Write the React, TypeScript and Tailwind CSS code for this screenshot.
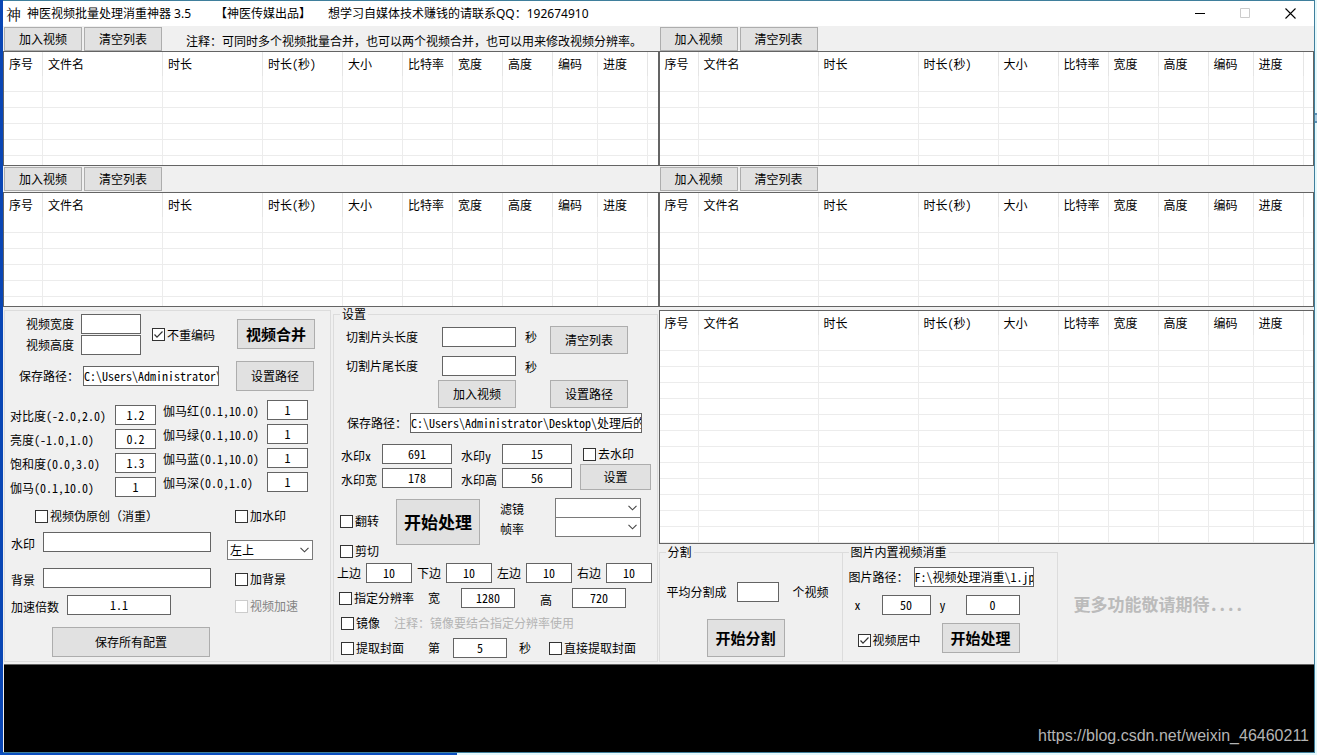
import type { ReactNode } from "react"
import clsx from "clsx"

const COLUMNS = [
  { title: "序号", width: "w-[39px]" },
  { title: "文件名", width: "w-[120px]" },
  { title: "时长", width: "w-[100px]" },
  { title: "时长(秒)", width: "w-[80px]" },
  { title: "大小", width: "w-[60px]" },
  { title: "比特率", width: "w-[50px]" },
  { title: "宽度", width: "w-[50px]" },
  { title: "高度", width: "w-[50px]" },
  { title: "编码", width: "w-[45px]" },
  { title: "进度", width: "w-[50px]" },
]

const BASIC_FILTERS = [
  { id: "contrast", label: "对比度(-2.0,2.0)", value: "1.2" },
  { id: "brightness", label: "亮度(-1.0,1.0)", value: "0.2" },
  { id: "saturation", label: "饱和度(0.0,3.0)", value: "1.3" },
  { id: "gamma", label: "伽马(0.1,10.0)", value: "1" },
]

const GAMMA_FILTERS = [
  { id: "gamma-r", label: "伽马红(0.1,10.0)", value: "1" },
  { id: "gamma-g", label: "伽马绿(0.1,10.0)", value: "1" },
  { id: "gamma-b", label: "伽马蓝(0.1,10.0)", value: "1" },
  { id: "gamma-w", label: "伽马深(0.0,1.0)", value: "1" },
]

const EDGES = [
  { id: "top", label: "上边" },
  { id: "bottom", label: "下边" },
  { id: "left", label: "左边" },
  { id: "right", label: "右边" },
]

function Button({ className, children }: { className?: string; children: ReactNode }) {
  return (
    <button
      type="button"
      className={clsx("shrink-0 border border-[#adadad] bg-[#e1e1e1] text-center whitespace-nowrap", className)}
    >
      {children}
    </button>
  )
}

type FieldProps = {
  id: string
  label: string
  labelClass?: string
  className?: string
  value?: string
  left?: boolean
}

function Field({ id, label, labelClass, className, value = "", left }: FieldProps) {
  return (
    <>
      <label htmlFor={id} className={clsx("shrink-0 whitespace-nowrap", labelClass)}>
        {label}
      </label>
      <input
        id={id}
        type="text"
        defaultValue={value}
        className={clsx(
          "h-5 shrink-0 border border-[#646464] bg-white pb-[2px] outline-none",
          left ? "text-left" : "text-center",
          className
        )}
      />
    </>
  )
}

type CheckProps = { label: string; checked?: boolean; disabled?: boolean; className?: string }

function Check({ label, checked, disabled, className }: CheckProps) {
  return (
    <label
      className={clsx(
        "flex h-5 shrink-0 items-center gap-[2px] whitespace-nowrap",
        disabled && "text-[#838383]",
        className
      )}
    >
      <span className="grid shrink-0">
        <input
          type="checkbox"
          defaultChecked={checked}
          disabled={disabled}
          className="peer col-start-1 row-start-1 size-[13px] appearance-none border border-[#333] bg-white disabled:border-[#ccc]"
        />
        <svg
          viewBox="0 0 13 13"
          className="pointer-events-none invisible col-start-1 row-start-1 size-[13px] peer-checked:visible"
        >
          <path d="M2.5 6.5 5 9.2l5.5-5.7" fill="none" stroke="#333" strokeWidth="1.2" />
        </svg>
      </span>
      {label}
    </label>
  )
}

function Select({ label, options, className }: { label: string; options: string[]; className?: string }) {
  return (
    <div className={clsx("grid shrink-0", className)}>
      <select
        aria-label={label}
        className="col-start-1 row-start-1 h-5 w-full appearance-none border border-[#7a7a7a] bg-white px-[2px] outline-none"
      >
        {options.map((o) => (
          <option key={o}>{o}</option>
        ))}
      </select>
      <svg
        viewBox="0 0 9 6"
        className="pointer-events-none col-start-1 row-start-1 mr-1 h-[6px] w-[9px] self-center justify-self-end"
      >
        <path d="M.5.8l4 4 4-4" fill="none" stroke="#444" strokeWidth="1.1" />
      </svg>
    </div>
  )
}

function Group({ title, className, children }: { title: string; className?: string; children: ReactNode }) {
  return (
    <fieldset className={clsx("min-w-0 border border-[#dcdcdc]", className)}>
      <legend className="ml-[6px] px-[2px] leading-3">{title}</legend>
      {children}
    </fieldset>
  )
}

function VideoTable({ rows, className }: { rows: number; className?: string }) {
  return (
    <div className={clsx("overflow-hidden border border-[#646464] bg-white", className)}>
      <table className="w-full table-fixed border-separate border-spacing-0">
        <thead>
          <tr className="h-6">
            {COLUMNS.map((c) => (
              <th
                key={c.title}
                className={clsx("border-r border-[#e5e5e5] p-0 pl-[5px] text-left font-normal whitespace-nowrap", c.width)}
              >
                {c.title}
              </th>
            ))}
            <td className="p-0" />
          </tr>
        </thead>
        <tbody>
          {Array.from({ length: rows }).map((_, i) => (
            <tr key={i} className="h-4">
              {COLUMNS.map((c) => (
                <td key={c.title} className="border-r border-b border-[#ececec] p-0" />
              ))}
              <td className="border-b border-[#ececec] p-0" />
            </tr>
          ))}
        </tbody>
      </table>
    </div>
  )
}

function ListPanel({ note, className }: { note?: string; className?: string }) {
  return (
    <section>
      <div className={clsx("flex gap-[2px] px-px pt-px", className)}>
        <Button className="h-6 w-[78px]">加入视频</Button>
        <Button className="h-6 w-[78px]">清空列表</Button>
        {note && <p className="ml-[22px] self-center pt-1 whitespace-nowrap">{note}</p>}
      </div>
      <VideoTable rows={6} className="h-[115px]" />
    </section>
  )
}

function TitleBar() {
  return (
    <header className="flex h-[25px] items-center bg-white font-['Noto_Sans','Noto_Sans_CJK_SC',sans-serif]">
      <span className="ml-[2px] w-[17px] text-center font-['Noto_Serif_CJK_SC','Noto_Sans_CJK_SC',serif] text-[15px] leading-4">
        神
      </span>
      <h1 className="ml-[5px] flex text-xs font-normal whitespace-nowrap">
        <span className="w-[188px]">神医视频批量处理消重神器 3.5</span>
        <span className="w-[113px]">【神医传媒出品】</span>
        <span>想学习自媒体技术赚钱的请联系QQ：192674910</span>
      </h1>
      <div className="ml-auto flex gap-3 pr-[7px]">
        <button type="button" aria-label="最小化" className="px-[11px]">
          <svg viewBox="0 0 11 11" className="size-[11px]">
            <path d="M0 5.5h10" stroke="#000" />
          </svg>
        </button>
        <button type="button" aria-label="最大化" disabled className="px-[11px]">
          <svg viewBox="0 0 11 11" className="size-[11px]">
            <path d="M.5.5h9v9h-9z" fill="none" stroke="#ccc" />
          </svg>
        </button>
        <button type="button" aria-label="关闭" className="px-[11px]">
          <svg viewBox="0 0 11 11" className="size-[11px]">
            <path d="M.5.5l10 10M10.5.5l-10 10" stroke="#000" strokeWidth="1.1" />
          </svg>
        </button>
      </div>
    </header>
  )
}

function MergeGroup() {
  return (
    <section className="mt-[3px] mb-px ml-px w-[327px] shrink-0 border border-[#dcdcdc] pt-[3px]">
      <div className="flex pl-[21px]">
        <div className="flex flex-col gap-px">
          <div className="flex items-center">
            <Field id="video-width" label="视频宽度" labelClass="w-[55px]" className="w-[60px]" />
          </div>
          <div className="flex items-center">
            <Field id="video-height" label="视频高度" labelClass="w-[55px]" className="w-[60px]" />
          </div>
        </div>
        <Check label="不重编码" checked className="ml-[11px] self-center" />
        <Button className="mt-[5px] ml-[22px] h-[30px] w-[78px] text-[15px] font-bold">视频合并</Button>
      </div>

      <div className="mt-[6px] flex items-center pl-[14px]">
        <Field
          id="merge-path"
          label="保存路径："
          labelClass="w-16"
          className="w-[136px]"
          value="C:\Users\Administrator\Desktop"
          left
        />
        <Button className="ml-[17px] h-[30px] w-[78px]">设置路径</Button>
      </div>

      <div className="mt-[9px] flex pl-[5px]">
        <div className="flex flex-col gap-1 pt-[5px]">
          {BASIC_FILTERS.map((f) => (
            <div key={f.id} className="flex items-center">
              <Field id={f.id} label={f.label} labelClass="w-[105px] pt-[2px]" className="w-[41px]" value={f.value} />
            </div>
          ))}
        </div>
        <div className="ml-[7px] flex flex-col gap-1">
          {GAMMA_FILTERS.map((f) => (
            <div key={f.id} className="flex items-center">
              <Field id={f.id} label={f.label} labelClass="w-[104px] pt-[2px]" className="w-[41px]" value={f.value} />
            </div>
          ))}
        </div>
      </div>

      <div className="mt-[9px] flex pl-[6px]">
        <div className="flex w-[216px] flex-col">
          <Check label="视频伪原创（消重）" className="ml-6" />
          <div className="mt-[6px] flex items-center">
            <Field id="watermark" label="水印" labelClass="w-8 pt-1" className="w-[168px]" />
          </div>
          <div className="mt-4 flex items-center">
            <Field id="background" label="背景" labelClass="w-8 pt-1" className="w-[168px]" />
          </div>
          <div className="mt-[7px] flex items-center">
            <Field id="speed" label="加速倍数" labelClass="w-14 pt-1" className="w-[104px]" value="1.1" />
          </div>
          <Button className="mt-3 ml-[41px] h-[30px] w-[158px]">保存所有配置</Button>
        </div>
        <div className="flex flex-col">
          <Check label="加水印" className="ml-2" />
          <Select label="水印位置" options={["左上", "右上", "左下", "右下"]} className="mt-[14px] w-[86px]" />
          <Check label="加背景" className="mt-[9px] ml-2" />
          <Check label="视频加速" disabled className="mt-[7px] ml-2" />
        </div>
      </div>
    </section>
  )
}

function SettingsGroup() {
  return (
    <Group title="设置" className="mt-px mr-px mb-px ml-[2px] flex-1">
      <div className="mt-[6px] flex">
        <div className="flex w-[216px] flex-col pl-3">
          <div className="mt-px flex items-center">
            <Field id="cut-head" label="切割片头长度" labelClass="w-24" className="w-[74px]" />
            <span className="ml-[9px]">秒</span>
          </div>
          <div className="mt-[9px] flex items-center">
            <Field id="cut-tail" label="切割片尾长度" labelClass="w-24" className="w-[74px]" />
            <span className="ml-[9px] pt-[2px]">秒</span>
          </div>
          <Button className="mt-1 ml-[92px] h-7 w-[78px]">加入视频</Button>
        </div>
        <div className="flex flex-col justify-between">
          <Button className="h-7 w-[78px]">清空列表</Button>
          <Button className="h-7 w-[78px]">设置路径</Button>
        </div>
      </div>

      <div className="mt-[5px] flex items-center pl-[13px]">
        <Field
          id="output-path"
          label="保存路径："
          labelClass="w-[63px]"
          className="w-[232px]"
          value="C:\Users\Administrator\Desktop\处理后的视频"
          left
        />
      </div>

      <div className="mt-[11px] flex pl-[7px]">
        <div className="flex flex-col gap-1">
          <div className="flex items-center">
            <Field id="wm-x" label="水印x" labelClass="w-[41px] pt-1" className="w-[70px]" value="691" />
            <Field id="wm-y" label="水印y" labelClass="ml-[9px] w-[41px] pt-1" className="w-[70px]" value="15" />
          </div>
          <div className="flex items-center">
            <Field id="wm-w" label="水印宽" labelClass="w-[41px] pt-1" className="w-[70px]" value="178" />
            <Field id="wm-h" label="水印高" labelClass="ml-[9px] w-[41px] pt-1" className="w-[70px]" value="56" />
          </div>
        </div>
        <div className="ml-2 flex flex-col">
          <Check label="去水印" className="ml-[3px]" />
          <Button className="h-[26px] w-[71px]">设置</Button>
        </div>
      </div>

      <div className="mt-2 flex">
        <div className="flex w-[62px] flex-col pt-[13px] pl-[6px]">
          <Check label="翻转" />
          <Check label="剪切" className="mt-[10px]" />
        </div>
        <Button className="mt-px h-[46px] w-[84px] text-[17px] font-bold">开始处理</Button>
        <div className="ml-5 flex w-[55px] flex-col pt-px leading-5">
          <span>滤镜</span>
          <span>帧率</span>
        </div>
        <div className="flex flex-col">
          <Select label="滤镜" options={[""]} className="w-[86px]" />
          <Select label="帧率" options={[""]} className="-mt-px w-[86px]" />
        </div>
      </div>

      <div className="mt-[2px] flex items-center gap-[5px] pl-[3px]">
        {EDGES.map((e) => (
          <div key={e.id} className="flex items-center">
            <Field id={`edge-${e.id}`} label={e.label} labelClass="w-[29px]" className="w-[46px]" value="10" />
          </div>
        ))}
      </div>

      <div className="mt-[5px] flex items-center pl-[5px]">
        <Check label="指定分辨率" className="w-[89px]" />
        <Field id="res-w" label="宽" labelClass="w-[33px]" className="w-[54px]" value="1280" />
        <Field id="res-h" label="高" labelClass="ml-[25px] w-8 pt-1" className="w-[54px]" value="720" />
      </div>

      <div className="mt-[5px] flex items-center pl-[7px]">
        <Check label="镜像" className="w-[53px]" />
        <span className="text-[#b4b4b4]">注释：镜像要结合指定分辨率使用</span>
      </div>

      <div className="mt-[5px] mb-[3px] flex items-center pl-[7px]">
        <Check label="提取封面" className="w-[87px]" />
        <Field id="cover-sec" label="第" labelClass="w-[25px]" className="w-[54px]" value="5" />
        <span className="ml-3">秒</span>
        <Check label="直接提取封面" className="ml-[18px]" />
      </div>
    </Group>
  )
}

function SplitGroup() {
  return (
    <Group title="分割" className="w-[184px] shrink-0">
      <div className="mt-6 flex items-center pl-[7px]">
        <Field id="split-count" label="平均分割成" labelClass="w-[70px]" className="w-[42px]" />
        <span className="ml-[14px]">个视频</span>
      </div>
      <Button className="mt-[17px] ml-[47px] h-[38px] w-[78px] text-[15px] font-bold">开始分割</Button>
    </Group>
  )
}

function PictureGroup() {
  return (
    <Group title="图片内置视频消重" className="-ml-px w-[216px] shrink-0">
      <div className="mt-[9px] flex items-center pl-[6px]">
        <Field
          id="picture-path"
          label="图片路径："
          labelClass="w-[65px]"
          className="w-[120px]"
          value="F:\视频处理消重\1.jpg"
          left
        />
      </div>
      <div className="mt-2 flex items-center pl-3">
        <Field id="pic-x" label="x" labelClass="w-[27px]" className="w-[49px]" value="50" />
        <Field id="pic-y" label="y" labelClass="ml-[9px] w-[26px]" className="w-[54px]" value="0" />
      </div>
      <div className="mt-2 flex items-center pl-[15px]">
        <Check label="视频居中" checked className="w-[84px] pt-1" />
        <Button className="h-[30px] w-[78px] text-[15px] font-bold">开始处理</Button>
      </div>
    </Group>
  )
}

export default function App() {
  return (
    <div className="flex min-h-screen flex-col bg-[#0a4fbf] font-['Noto_Sans_Mono_CJK_SC','Noto_Sans_CJK_SC',monospace] text-xs text-black">
      <div className="flex flex-1">
        <div className="w-[3px] shrink-0 bg-[#0a46b4]" />
        <main className="flex min-w-0 flex-1 flex-col border-t border-r border-b border-[#3f7f9c] bg-[#f0f0f0]">
          <TitleBar />
          <div className="grid grid-cols-2">
            <div className="min-w-0">
              <ListPanel
                className="h-[25px]"
                note="注释：可同时多个视频批量合并，也可以两个视频合并，也可以用来修改视频分辨率。"
              />
              <ListPanel className="h-[26px]" />
              <div className="flex">
                <MergeGroup />
                <SettingsGroup />
              </div>
            </div>
            <div className="flex min-w-0 flex-col">
              <ListPanel className="h-[25px]" />
              <ListPanel className="h-[26px]" />
              <VideoTable rows={13} className="mt-[3px] h-[234px]" />
              <div className="mt-[2px] mb-px flex flex-1">
                <SplitGroup />
                <PictureGroup />
                <p className="ml-4 self-center text-[17px] font-bold whitespace-nowrap text-[#bbb]">
                  更多功能敬请期待....
                </p>
              </div>
            </div>
          </div>
          <footer className="mt-px ml-px flex min-h-20 flex-1 items-end justify-end border-t border-[#646464] bg-black pr-[5px] pb-1 font-['Liberation_Sans',sans-serif] text-base text-[#b4b4b4]">
            https://blog.csdn.net/weixin_46460211
          </footer>
        </main>
        <div className="w-[2px] shrink-0 bg-[#e4f8fc] pt-[113px]">
          <div className="h-[10px] border-y-2 border-[#5b8fb5] bg-[#a9cbe0]" />
        </div>
      </div>
      <div className="flex h-[2px]">
        <div className="w-[457px] bg-[#0a4fbf]" />
        <div className="flex-1 bg-[#e4f8fc]" />
      </div>
    </div>
  )
}
